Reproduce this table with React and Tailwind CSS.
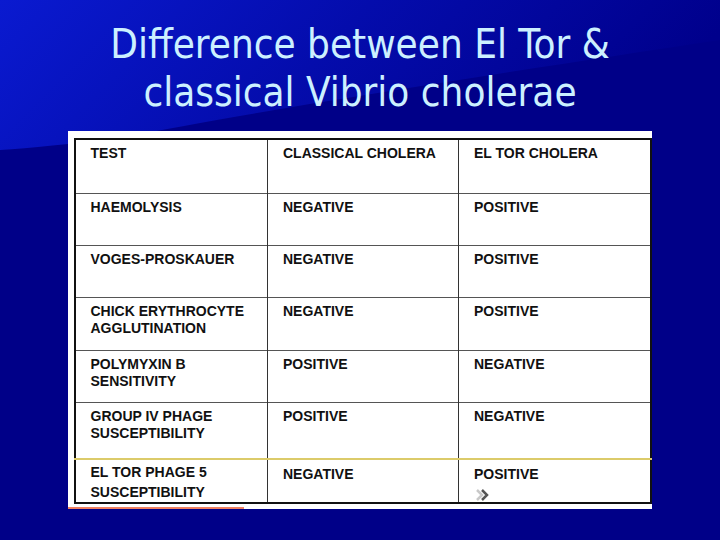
const rows = [
  { test: ['HAEMOLYSIS'], classical: 'NEGATIVE', eltor: 'POSITIVE', h: 'h-[52px]' },
  { test: ['VOGES-PROSKAUER'], classical: 'NEGATIVE', eltor: 'POSITIVE', h: 'h-[52px]' },
  { test: ['CHICK ERYTHROCYTE', 'AGGLUTINATION'], classical: 'NEGATIVE', eltor: 'POSITIVE', h: 'h-[53px]' },
  { test: ['POLYMYXIN B', 'SENSITIVITY'], classical: 'POSITIVE', eltor: 'NEGATIVE', h: 'h-[52px]' },
  { test: ['GROUP IV PHAGE', 'SUSCEPTIBILITY'], classical: 'POSITIVE', eltor: 'NEGATIVE', h: 'h-[57px]' },
]

function Cell({ children, last }) {
  return (
    <td className={`align-top pl-[15px] pt-[5px] ${last ? '' : 'border-r border-[#333]'}`}>
      {children}
    </td>
  )
}

export default function App() {
  return (
    <div className="relative w-[720px] h-[540px] overflow-hidden bg-[#000088] font-['Liberation_Sans',Arial,sans-serif]">
      {/* background swoosh */}
      <svg className="absolute inset-0" width="720" height="540" viewBox="0 0 720 540">
        <defs>
          <linearGradient id="sw" x1="0" y1="0" x2="1" y2="0.2">
            <stop offset="0" stopColor="#0a1ad0" />
            <stop offset="0.5" stopColor="#040cac" />
            <stop offset="1" stopColor="#00008c" />
          </linearGradient>
        </defs>
        <path d="M0 0 H720 V40 C520 70 260 110 120 138 C70 144 30 148 0 150 Z" fill="url(#sw)" />
      </svg>

      <div className="relative flex flex-col items-center">
        <h1 className="mt-[20px] text-center text-[40px] leading-[48px] text-[#ccf0ff] font-['DejaVu_Sans',sans-serif] [font-stretch:condensed]">
          Difference between El Tor &amp;
          <br />
          classical Vibrio cholerae
        </h1>

        <div className="relative mt-[15px] ml-[-1px] w-[584px] h-[378px] bg-white pl-[6px] pt-[7px] pr-[2px]">
          <table className="w-[576px] border-collapse border-2 border-[#111] text-[14px] leading-[17px] font-bold text-[#111] table-fixed">
            <colgroup>
              <col className="w-[193px]" />
              <col className="w-[191px]" />
              <col className="w-[192px]" />
            </colgroup>
            <tbody>
              <tr className="h-[54px] border-b border-[#555]">
                <Cell>TEST</Cell>
                <Cell>CLASSICAL CHOLERA</Cell>
                <Cell last>EL TOR CHOLERA</Cell>
              </tr>
              {rows.map((r, i) => (
                <tr key={i} className={`${r.h} ${i === rows.length - 1 ? 'border-b-2 border-[#dccb6a]' : 'border-b border-[#555]'}`}>
                  <Cell>
                    {r.test.map(t => <div key={t}>{t}</div>)}
                  </Cell>
                  <Cell>{r.classical}</Cell>
                  <Cell last>{r.eltor}</Cell>
                </tr>
              ))}
              <tr className="h-[43px]">
                <td className="align-top pl-[15px] pt-[2px] leading-[20px] border-r border-[#333]">
                  <div>EL TOR PHAGE 5</div>
                  <div>SUSCEPTIBILITY</div>
                </td>
                <td className="align-top pl-[15px] pt-[6px] border-r border-[#333]">NEGATIVE</td>
                <td className="align-top pl-[15px] pt-[6px] relative">
                  POSITIVE
                  <svg className="absolute left-[16px] top-[28px]" width="16" height="14" viewBox="0 0 16 14">
                    <path d="M2 2 L7 7 L2 12" fill="none" stroke="#c8c8c8" strokeWidth="2.5" />
                    <path d="M7 2 L12 7 L7 12" fill="none" stroke="#555" strokeWidth="2.5" />
                  </svg>
                </td>
              </tr>
            </tbody>
          </table>
          <div className="absolute left-0 bottom-0 w-[176px] h-[2px] bg-[#f08060]" />
        </div>
      </div>
    </div>
  )
}
